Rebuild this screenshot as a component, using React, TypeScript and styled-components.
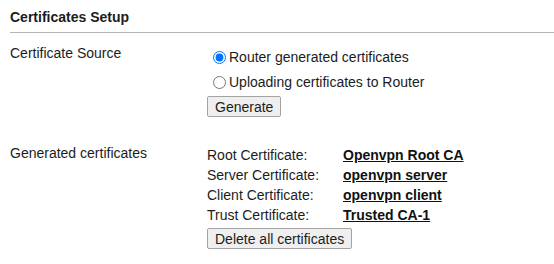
import React from "react";
import styled, { createGlobalStyle } from "styled-components";

const Global = createGlobalStyle`
  html, body { margin: 0; padding: 0; background: #ffffff; }
  body { font-family: "Liberation Sans", Arial, sans-serif; font-size: 14px; color: #1c1c1c; }
`;

const Page = styled.div`
  margin-left: 10px;
  width: 544px;
`;

const Title = styled.div`
  font-weight: bold;
  line-height: 16px;
  padding: 9px 0 7px 0;
  border-bottom: 1px solid #b4b4b4;
`;

const Section = styled.div<{ $top: number }>`
  display: grid;
  grid-template-columns: 197px 1fr;
  margin-top: ${(p) => p.$top}px;
`;

const FieldLabel = styled.div`
  line-height: 16px;
  padding-top: 1px;
`;

const Controls = styled.div<{ $pad: number }>`
  display: flex;
  flex-direction: column;
  align-items: flex-start;
  padding-top: ${(p) => p.$pad}px;
`;

const RadioRow = styled.label`
  display: flex;
  align-items: center;
  height: 20px;
  line-height: 16px;
  margin-bottom: 4px;
  &:first-child {
    margin-bottom: 5px;
  }
`;

const Radio = styled.input`
  width: 13px;
  height: 13px;
  margin: 0 3px 0 6px;
`;

const Button = styled.button<{ $top: number }>`
  font-family: "Liberation Sans", Arial, sans-serif;
  font-size: 14px;
  line-height: 16px;
  color: #1c1c1c;
  background: #efefef;
  border: 1px solid #a3a3a3;
  border-radius: 2px;
  padding: 2px 7px 1px;
  margin-top: ${(p) => p.$top}px;
`;

const CertGrid = styled.div`
  display: grid;
  grid-template-columns: 136px auto;
  line-height: 20px;
`;

const CertValue = styled.span`
  font-weight: bold;
  text-decoration: underline;
  color: #111;
`;

const certs: [string, string][] = [
  ["Root Certificate:", "Openvpn Root CA"],
  ["Server Certificate:", "openvpn server"],
  ["Client Certificate:", "openvpn client"],
  ["Trust Certificate:", "Trusted CA-1"],
];

export default function App() {
  return (
    <>
      <Global />
      <Page>
        <Title>Certificates Setup</Title>
        <Section $top={11}>
          <FieldLabel>Certificate Source</FieldLabel>
          <Controls $pad={3}>
            <RadioRow>
              <Radio type="radio" name="src" defaultChecked />
              Router generated certificates
            </RadioRow>
            <RadioRow>
              <Radio type="radio" name="src" />
              Uploading certificates to Router
            </RadioRow>
            <Button $top={0}>Generate</Button>
          </Controls>
        </Section>
        <Section $top={27}>
          <FieldLabel>Generated certificates</FieldLabel>
          <Controls $pad={1}>
            <CertGrid>
              {certs.map(([k, v]) => (
                <React.Fragment key={k}>
                  <span>{k}</span>
                  <CertValue>{v}</CertValue>
                </React.Fragment>
              ))}
            </CertGrid>
            <Button $top={3}>Delete all certificates</Button>
          </Controls>
        </Section>
      </Page>
    </>
  );
}
